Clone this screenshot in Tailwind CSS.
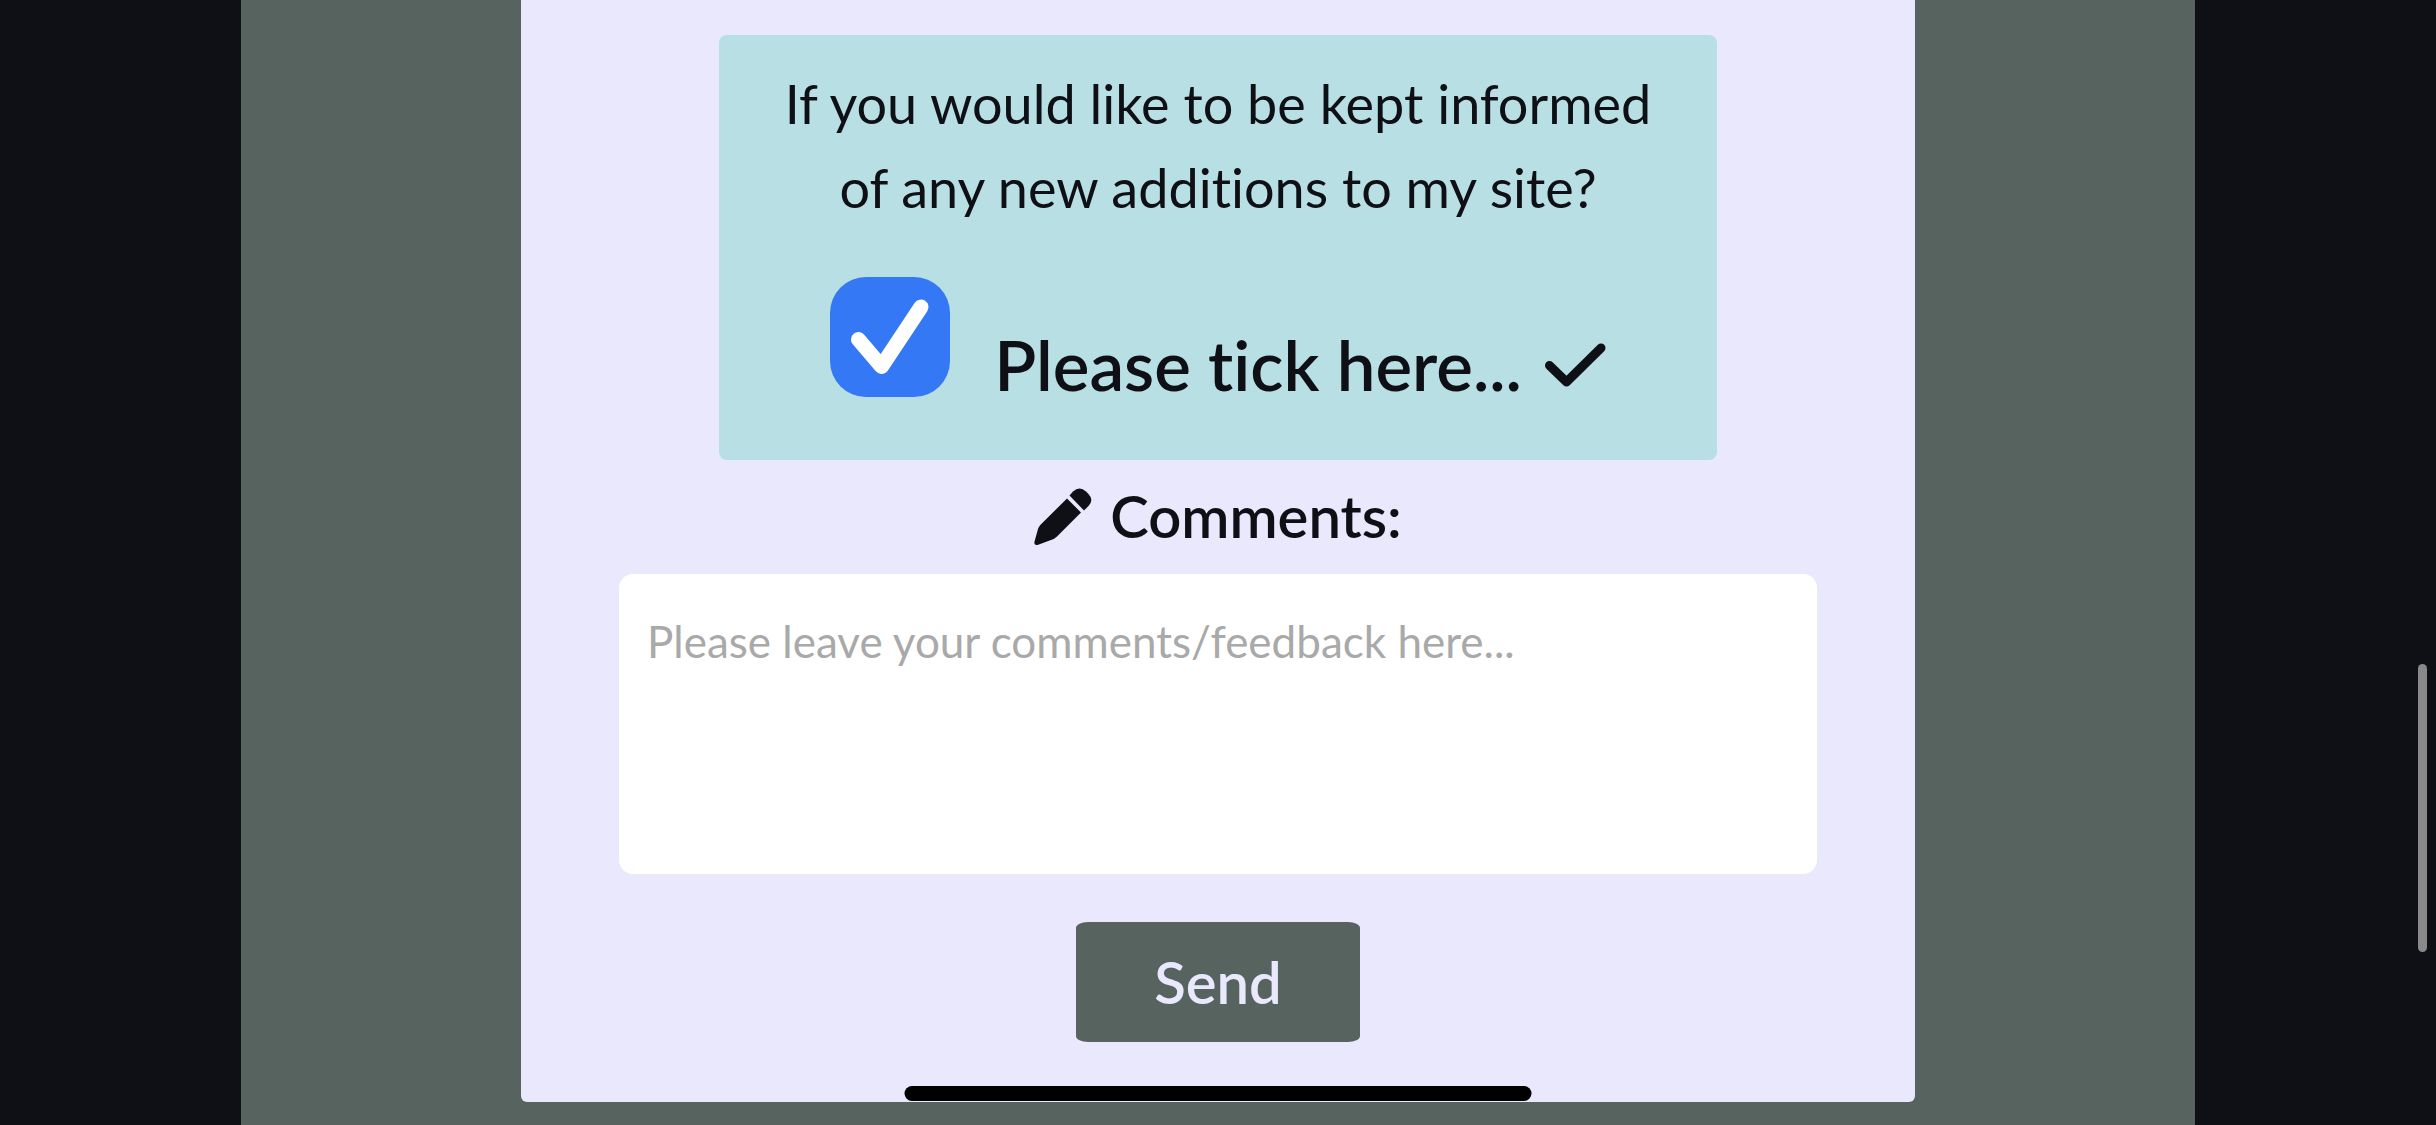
<!DOCTYPE html>
<html lang="en">
<head>
<meta charset="utf-8">
<meta name="viewport" content="width=device-width, initial-scale=1">
<title>Feedback form</title>
<script src="https://cdn.jsdelivr.net/npm/@tailwindcss/browser@4"></script>
</head>
<body class="min-h-screen bg-[#0f1015] px-[241px] font-['Lato','Open_Sans',sans-serif] text-[#0f1015] [font-variant-ligatures:none]">
<main class="min-h-screen bg-[#57635e] px-[280px] pb-[22px]">
  <form class="flex flex-col items-center rounded-b-md bg-[#e9e8fd] px-[98px] pt-[35px] pb-[60px]">
    <section class="w-full max-w-[998px] rounded-lg bg-[#b8dfe3] pt-[27px] pb-[55px]">
      <p class="text-center text-[54px] leading-[84px]">If you would like to be kept informed<br>of any new additions to my site?</p>
      <div class="mt-[47px] flex items-start justify-center gap-11">
        <span class="grid size-[120px]">
          <input id="updates" type="checkbox" checked class="peer col-start-1 row-start-1 size-[120px] appearance-none rounded-[36px] bg-[#3478f6]">
          <svg class="pointer-events-none col-start-1 row-start-1 hidden size-[120px] peer-checked:block" viewBox="0 0 120 120" fill="none" stroke="#fff" stroke-width="15" stroke-linecap="round" stroke-linejoin="round" aria-hidden="true"><path d="M28.500 62.500L51.500 89.500L91 30"/></svg>
        </span>
        <label for="updates" class="flex items-start gap-[22px] pt-12 text-[69px] leading-[80px] font-semibold">Please tick here...
          <svg class="mt-[17px] h-[46px] w-[62px]" viewBox="0 0 62 46" fill="none" stroke="currentColor" stroke-width="9" stroke-linecap="round" stroke-linejoin="round" aria-hidden="true"><path d="M5.500 23.500L22.500 40L57 6"/></svg>
        </label>
      </div>
    </section>
    <label for="comments" class="mt-[22px] flex items-start gap-[18px] text-[58px] leading-[68px] font-semibold">
      <svg class="mt-1.5 size-[58px]" viewBox="0 0 58 58" fill="currentColor" aria-hidden="true">
        <path d="M33 10.500L47 24.500L23 48.500Q20.500 51 17 52L3.500 56.900Q0 57.500.400 54L4 41Q4.800 38.500 6.500 36.700Z"/>
        <path d="M35.500 7.500L39 3.500Q45.500-2.500 52 3.500L54 5.500Q60.500 12 54.500 18L50 22.500Z"/>
      </svg>
      Comments:
    </label>
    <textarea id="comments" placeholder="Please leave your comments/feedback here..." class="mt-6 block h-[300px] w-full resize-none rounded-[14px] bg-white px-7 pt-[41px] text-[44px] leading-[52px] placeholder:text-[#a9a9a9]"></textarea>
    <button type="submit" class="mt-12 w-[284px] rounded-[12px/6px] bg-[#57635e] py-[26px] text-[58px] leading-[68px] font-semibold text-[#e9e8fd]">Send</button>
  </form>
</main>
<!-- Home indicator and scroll thumb float over the page -->
<div class="fixed bottom-6 left-1/2 h-[15px] w-[627px] -translate-x-1/2 rounded-full bg-black"></div>
<div class="fixed top-[664px] right-[9px] h-72 w-[9px] rounded-full bg-[#89898b]"></div>
</body>
</html>
